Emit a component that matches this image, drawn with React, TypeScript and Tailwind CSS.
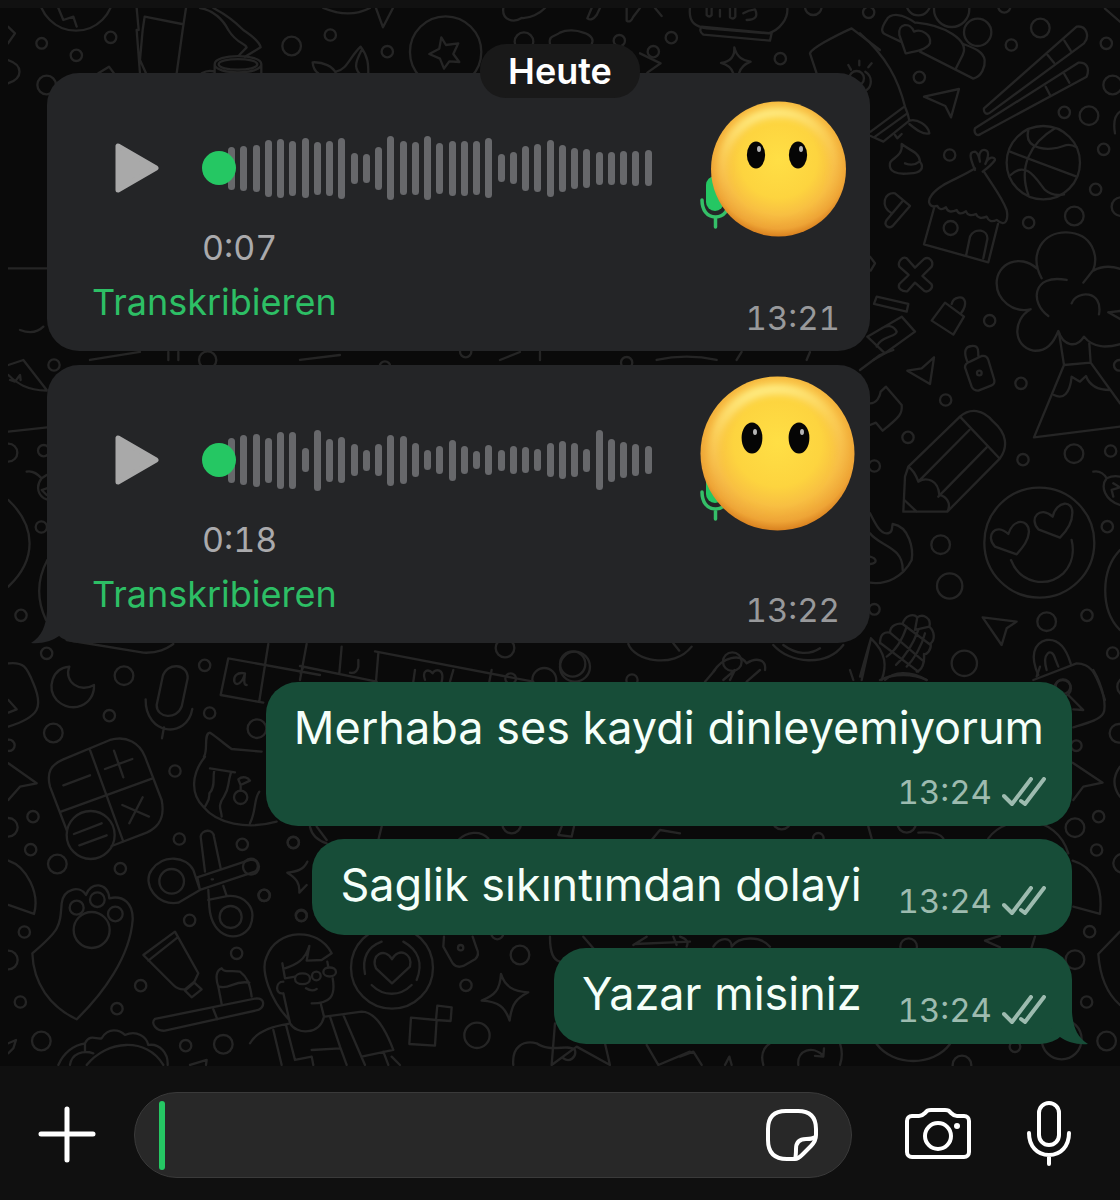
import { useState } from 'react';

type Dot = [number, number, number];

interface DoodlePatch {
  at: string;
  dots: Dot[];
  paths: string[];
}

// Wallpaper line art. Every patch is drawn at 3x and scaled down into place.
const patches: DoodlePatch[] = [
  {
    at: 'translate(40 30) scale(0.3333)',
    dots: [[5, 40, 16], [212, 22, 17], [109, 76, 17], [20, 165, 28], [755, 48, 28], [871, 15, 17], [1042, 65, 17], [503, 990, 26], [1217, 66, 107], [108, -110, 112]],
    paths: [
      'M290 0L300 130M308 0L300 90L318 130M428 0L410 130M175 130L207 110L222 130M290 -66L296 0M314 -40L426 -18M438 -66L428 0M314 -40L308 0',
      'M565 0C590 40 615 40 620 52L598 75M610 0C640 20 660 40 662 52L615 80M480 -66C520 -60 550 -30 565 0M520 -66Q570 -40 610 0',
      'M524 103C524 70 664 70 664 103C664 135 524 135 524 103ZM536 103C536 82 652 82 652 103C652 124 536 124 536 103ZM524 103V140M664 103V140M485 130Q505 118 524 125',
      'M818 97C850 95 880 110 888 130M818 97Q820 120 835 130M888 125C920 120 930 80 962 50C985 80 985 105 985 130M958 130C940 110 950 90 965 60',
      'M1204 22L1218 45L1255 40L1240 72L1258 96L1228 94L1212 116L1200 86L1168 72L1198 56Z',
      'M850 -66C900 -45 950 -45 990 -66M1008 -66L1029 -8L1059 -66M55 -66L70 -30L100 -40L110 -10',
      'M150 990L300 966M385 966V990M415 966V990M780 990L900 975M-96 715H20M-96 -10L-75 10L-96 40M-96 90C-50 105 -50 145 -96 160M-60 900C-20 915 0 900 10 890',
    ],
  },
  {
    at: 'translate(440 30) scale(0.3333)',
    dots: [[252, 35, 28], [538, 32, 17], [694, 23, 17], [1021, 86, 17], [640, 65, 17], [1250, 145, 22], [77, 965, 17], [560, 998, 17], [1120, -70, 25]],
    paths: [
      'M330 42C325 15 345 20 360 8C380 -2 410 0 430 8C455 15 462 30 455 42',
      'M600 70L662 100L622 128',
      'M883 52C890 80 905 90 932 95C905 105 900 120 897 130M883 52C885 80 870 95 843 99C865 105 875 115 880 130',
      'M1130 130L1110 70C1115 55 1180 20 1235 -5L1320 60',
      'M1225 105l8 14M1258 92v14M1295 100l-10 12M1276 125C1300 140 1295 170 1280 180',
      'M190 -66C185 -30 220 -20 245 -36C270 -34 300 -50 315 -66M455 -66L442 -35Q455 -25 470 -45L480 -66M560 -66V-28Q572 -20 580 -40L600 -66M645 -66L665 -42',
      'M750 -66C745 -20 770 -10 800 -5L985 10C1020 0 1045 -35 1042 -66M785 -10L995 10L990 32L790 14Q775 2 785 -10Z',
      'M800 -66V-45Q808 -36 815 -45V-66M840 -60V-40M870 -66V-38Q880 -30 886 -40V-66M910 -50Q925 -60 945 -62Q960 -30 920 -30',
      'M180 990L240 966M300 966V990M890 990L905 966M1110 966L1100 990M650 990Q740 970 830 990',
    ],
  },
  {
    at: 'translate(860 0) scale(0.3333)',
    dots: [[26, 37, 17], [353, 97, 41], [541, 84, 28], [454, 135, 17], [739, 130, 17], [178, 232, 17], [758, 255, 28], [613, 337, 17], [687, 347, 28], [731, 448, 17], [269, 465, 17], [707, 568, 17], [643, 648, 28], [506, 668, 17], [783, 620, 28], [389, 962, 17], [275, 28, 53], [175, 10, 36], [433, 20, 18], [550, 488, 110], [272, 684, 21]],
    paths: [
      'M165 68C130 42 92 35 78 62C60 90 65 100 80 105L122 125M180 155L340 236C365 230 376 200 374 180C370 155 345 145 310 132M170 68C250 75 330 120 308 165L288 205',
      'M137 160L118 105C113 70 150 65 162 95C185 85 215 105 210 130C200 150 165 155 137 160Z',
      'M0 100C80 170 115 240 135 320C142 335 145 345 148 362L70 425L32 408M32 395L130 322M45 410L142 340M148 362C170 355 205 375 208 400C190 405 170 390 148 372M105 405L112 415L125 402',
      'M192 290L297 267L273 352L256 318Z',
      'M125 432C145 450 178 455 180 485C195 505 180 520 150 520C110 525 85 515 90 490C92 475 130 470 125 432M135 490Q160 500 178 485',
      'M95 640C60 620 72 575 105 580L150 618L98 678C85 688 70 675 80 660L128 603',
      'M650 80L372 325C370 340 380 345 390 338L672 130C690 110 680 75 650 80ZM613 122L632 152M563 165L582 188',
      'M655 188L345 385C340 400 352 410 362 402L680 230C690 205 680 185 655 188ZM613 222L628 248M557 260L570 285',
      'M450 455L650 530M585 385C510 430 475 500 505 585M505 392C490 450 570 455 610 438Q630 430 650 442M452 525C500 480 530 540 555 570C570 583 590 588 612 583',
      'M345 510C330 475 325 455 345 455Q355 458 360 485C352 455 368 445 380 452Q390 460 376 492C385 470 405 468 405 480Q395 495 368 515M345 505C300 535 240 550 215 585C200 605 208 625 232 618Q240 635 258 622Q265 642 290 630Q297 648 318 634Q325 652 348 642Q355 660 380 650Q388 670 410 660C440 685 445 655 440 630C425 590 400 560 372 515M222 625L192 733L385 787L414 672M318 768L330 710C345 680 385 690 382 718L370 775',
      'M140 775L165 803L192 777C208 768 222 785 215 800L187 828L215 853C220 865 205 880 192 872L165 848L142 874C125 875 112 865 118 852L146 825L118 800C112 785 128 768 140 775Z',
      'M50 890L145 912L140 935L42 912ZM30 770L45 790L32 812',
      'M255 908L312 950L280 1004L215 962ZM275 912C280 890 310 885 315 905Q318 920 303 940',
      'M545 835C505 760 550 695 620 697C700 700 715 770 700 810L670 848M700 812C730 795 760 798 790 810M530 805C480 760 410 790 410 850C410 900 460 940 512 928C455 960 460 1040 520 1052C560 1055 580 1030 595 993C610 1040 650 1045 672 1010C700 1045 740 1045 790 1030M565 948C510 910 515 820 620 840M635 910C650 870 730 870 717 943M745 937L790 962M745 937L790 932',
      'M22 1010L125 950L165 995L75 1060ZM50 1040C60 1010 110 1010 110 995C100 975 80 975 65 985M40 1080L75 1060M735 26L780 65M765 400C760 370 765 345 780 335',
    ],
  },
  {
    at: 'translate(860 350) scale(0.3333)',
    dots: [[483, 100, 17], [257, 150, 17], [144, 262, 17], [43, 348, 17], [489, 329, 17], [642, 311, 28], [752, 303, 17], [778, 46, 16], [242, 584, 28], [269, 708, 38], [742, 530, 17], [560, 815, 28], [681, 796, 17], [758, 909, 17], [313, 940, 38], [43, 778, 16], [358, 69, 7], [538, 578, 165], [609, 1010, 22]],
    paths: [
      'M142 62L185 55L222 22L210 102Z',
      'M330 35L365 18Q380 15 385 30L403 90Q405 102 395 106L355 122Q340 122 335 110L315 52Q315 40 330 35ZM322 35C310 5 315 -10 335 -12C355 -15 355 0 355 18',
      'M597 -52L612 45L692 38L780 160M612 45L522 262L780 230M688 -20L692 38M582 135C610 150 630 130 635 80L660 95L678 78C690 110 720 120 750 120',
      'M30 160C50 160 60 140 62 125L78 110L125 165C128 190 120 200 68 242L48 218L30 225M0 60L60 15L100 0',
      'M145 350L300 200C330 172 370 178 400 215C440 250 445 290 420 325L262 485L130 485L135 380ZM300 200L418 325M328 240L175 395M380 292L235 440M145 350C160 360 170 380 175 395C200 380 235 390 238 435C260 440 275 460 262 485M133 450L170 485',
      'M470 613L405 590C375 560 405 515 445 552C460 505 505 505 507 545C505 575 485 595 470 613Z',
      'M600 563L535 538C505 505 540 465 578 500C590 450 640 450 637 490C637 520 618 545 600 563Z',
      'M453 630C480 700 560 715 610 670C640 640 642 600 635 570',
      'M30 490C45 520 60 550 80 550C100 550 95 530 98 522C150 530 160 600 155 630C130 680 80 705 30 698M30 550C60 590 130 590 128 660M30 620C50 625 55 640 30 642',
      'M60 880C60 850 75 845 90 848C90 825 115 818 128 822C135 795 160 790 172 802C190 790 215 805 208 830C225 845 225 870 212 880C215 900 200 915 192 912C195 940 185 960 170 965M62 880L175 965M90 848L192 935M128 822L212 885M172 802L165 840L208 830M80 920C110 900 130 860 140 830M108 945C135 920 160 880 175 840M140 950C160 930 185 890 195 850',
      'M0 980L33 865C80 910 80 950 65 990M33 865L5 990M75 990C100 965 150 960 200 990',
      'M368 802L470 815L440 835L425 885Z',
      'M535 975C510 920 520 880 560 870C600 865 620 900 632 940M560 960C545 910 575 890 585 925L595 950M520 990L650 940C690 940 705 960 735 1050',
      'M780 600C722 660 720 780 780 840M700 365C720 360 735 375 740 385C720 410 735 450 780 465M740 385Q760 375 780 380M760 400L780 412L755 420L760 440',
    ],
  },
  {
    at: 'translate(0 360) scale(0.3333)',
    dots: [[162, 15, 17], [25, 278, 27], [131, 272, 17], [124, 501, 17], [63, 766, 17], [1155, 20, 16]],
    paths: [
      'M25 15L70 0L140 90M25 45C50 70 80 90 140 92M30 60L45 65L60 45L62 60',
      'M25 215L142 202M80 335C100 330 115 345 125 355C105 380 115 410 140 418M125 355L140 345M140 385L125 390L140 405',
      'M25 420C110 500 110 600 25 680M142 600C110 660 110 720 138 780',
    ],
  },
  {
    at: 'translate(440 360) scale(0.3333)',
    dots: [[195, 864, 28], [398, 912, 38], [877, 905, 28]],
    paths: ['M565 852C580 900 700 930 755 860M1000 855C1050 912 1160 920 1210 855M1030 855C1070 885 1110 885 1140 865M700 850L718 872'],
  },
  {
    at: 'translate(0 640) scale(0.3333)',
    dots: [[140, 40, 17], [372, 107, 28], [614, 76, 17], [328, 227, 17], [160, 279, 28], [629, 219, 17], [27, 316, 17], [525, 393, 17], [771, 266, 28], [99, 530, 17], [92, 629, 17], [172, 672, 28], [538, 597, 17], [727, 613, 17], [361, 686, 17], [73, 876, 17], [880, 607, 17], [792, 766, 17], [904, 826, 17], [569, 841, 17], [710, 940, 17], [422, 1037, 17], [351, 1106, 17], [61, 1086, 17], [124, 1203, 28], [557, 1217, 17], [670, 1213, 28], [25, 562, 28], [25, 960, 28], [515, 724, 37], [692, 831, 33], [230, 803, 21], [292, 779, 22], [346, 822, 22], [275, 870, 54], [722, 472, 20], [272, 585, 72]],
    paths: [
      'M200 0L430 38C480 40 500 25 520 12',
      'M208 80C155 85 140 145 170 180C215 225 285 195 282 135C240 160 190 125 208 80Z',
      'M25 70C70 65 80 80 100 130C130 200 120 230 25 260M25 180L50 208L25 218',
      'M488 110C500 65 565 70 563 115L545 200C530 240 470 235 470 195ZM437 178C435 285 560 300 577 207M492 262L486 295',
      'M190 358L330 300C380 285 420 310 435 350L485 480C495 530 480 560 440 578L335 618M190 358C150 375 140 400 150 440L200 570M270 330L370 605M183 515L458 415M190 436L270 406M315 387L397 357M342 332L370 412M367 495L447 530M428 472L388 550M222 582L305 550M238 616L320 586',
      'M612 350C625 330 610 280 630 278C650 290 670 310 695 327L785 335M615 350C575 400 570 460 610 500C650 550 740 570 830 545M630 385L705 397M645 388C635 400 650 440 628 460C630 480 620 490 615 500M693 397C680 440 690 440 672 470C650 500 665 510 665 530M778 455C760 480 770 510 750 550M722 435L715 418C730 405 745 415 750 422ZM722 435V452',
      'M602 590C605 568 640 565 642 590L662 685M602 590L615 695M592 712L750 660C775 655 780 685 765 695L600 750ZM600 750L535 788C470 800 425 730 455 690C490 640 560 650 580 690L600 750M625 750L628 800C635 900 720 910 750 860C775 800 730 765 685 768L625 780M670 738L680 768M635 718h4',
      'M97 940C180 870 180 860 185 790C190 745 240 735 258 765C270 725 325 725 328 775C370 765 400 790 398 840C390 950 310 1060 230 1138C150 1100 100 1030 97 940Z',
      'M430 945L525 875L595 1000L583 1025L555 1048C540 1050 530 1045 520 1035ZM445 962L532 893M555 1052L583 1028L605 1048L575 1072Z',
      'M465 1137L770 1075C795 1075 795 1100 775 1110L495 1172C470 1175 450 1150 465 1137M640 1108L652 1138M665 1092L655 1040C645 1010 650 990 665 985C675 1000 690 990 720 995C740 1010 750 1030 755 1070M658 1040C690 1050 700 1020 748 1028',
      'M175 1275C190 1240 220 1215 255 1210C270 1180 290 1200 305 1195C325 1160 360 1170 375 1185C410 1170 440 1190 445 1215C480 1210 505 1240 503 1275M260 1275C320 1200 440 1190 490 1275M210 1275C215 1240 250 1230 280 1240M255 1210V1235M570 1275L620 1260L618 1275',
      'M25 370L110 430L60 440L25 480M25 662C80 680 120 760 102 822L25 795M25 1210L48 1200L40 1225L25 1240',
      'M685 55L960 105M685 55L662 165L790 188M805 12L778 183M920 12L900 120',
      'M735 100C710 95 700 110 703 125C708 140 728 130 735 100C733 120 730 135 740 135',
    ],
  },
  {
    at: 'translate(250 670) scale(0.3333)',
    dots: [[130, 518, 17], [3, 590, 24], [43, 676, 17], [154, 738, 16], [810, 855, 28], [648, 946, 17], [681, 1096, 38], [782, 26, 16], [883, 30, 36], [975, -10, 45], [1146, 30, 17], [785, 462, 28], [426, 893, 123], [632, 833, 8], [742, 790, 18], [199, 918, 13]],
    paths: [
      'M345 912C335 860 355 830 395 815M460 815C505 840 520 880 500 930M365 945C400 980 450 980 485 945',
      'M426 940L378 895C360 855 405 830 426 868C445 830 490 850 480 890Z',
      'M582 800L580 830L608 880Q620 895 640 888L675 868Q690 855 680 835L668 800',
      'M753 912C765 950 790 965 835 967C800 985 785 1000 779 1052C765 1010 745 995 695 992C735 975 750 960 753 912Z',
      'M483 1043L560 1050L555 1127L478 1122ZM562 1007L605 1012L602 1053L558 1050Z',
      'M118 1050C60 990 30 900 50 860C80 775 205 770 245 850L215 870L170 872L178 828C165 870 140 885 100 897M97 880L105 925L135 920M100 935C75 935 75 975 100 970L120 1060C140 1095 210 1095 222 1040L212 1000M232 875L235 892M248 925C258 980 240 1000 185 1000M168 955Q185 966 200 957',
      'M135 926C135 905 180 905 180 926C180 948 135 948 135 926ZM220 906C220 888 258 888 258 906C258 924 220 924 220 906Z',
      'M0 1120C20 1085 60 1070 115 1062M225 1040L335 1025C370 1025 400 1060 430 1140L335 1160M70 1080L95 1185M108 1065L135 1170L185 1160L190 1185M240 1040L270 1130L290 1185M280 1035L345 1185M185 1140L270 1135M400 1145L415 1185M425 1160L450 1185',
      'M905 1185L915 1060M905 1185L980 1130L1080 1185L1065 1120M790 1185C785 1130 820 1110 860 1120C900 1150 960 1120 975 1140C980 1160 960 1180 940 1165M1190 1125L1225 1185L1320 1145',
      'M150 -12L380 35M160 -10L152 10M275 -70L268 10M385 -50L378 35M495 0L490 35M610 0L600 35M725 0L718 35M525 30C515 0 535 -5 548 10C555 -5 585 -5 575 35M300 8Q320 12 325 -10V-30M180 470C185 495 200 510 230 520M200 470L230 510M395 470L385 510M625 510C650 485 690 480 715 505M935 470L925 495L965 500L972 470M1205 510L1230 480L1290 490',
      'M375 -56L850 35',
      'M172 575C160 600 140 605 112 608C140 625 150 640 148 668L170 645M900 800C900 850 910 870 930 875M1000 800L1030 835M1150 825L1190 800M1155 822L1320 815M1270 800L1280 825',
    ],
  },
  {
    at: 'translate(680 670) scale(0.3333)',
    dots: [[1189, 227, 16], [1148, 55, 25], [1185, 473, 28], [1256, 440, 17], [1250, 540, 17], [1317, 190, 28], [1229, 785, 17], [1185, 869, 28], [1220, 996, 17], [1280, 1113, 28], [1328, 580, 28], [686, 830, 25], [415, 505, 16], [846, 1185, 28], [1005, 1130, 16], [1145, 1108, 60], [305, 450, 28], [680, 460, 28], [1340, 50, 28]],
    paths: [
      'M1240 0C1270 50 1280 110 1270 130C1260 150 1220 160 1180 172M1070 20L1080 -10M1165 75L1210 120L1180 118',
      'M1178 278L1268 338L1210 350L1180 390M1320 290C1298 320 1298 350 1320 380M1178 572C1240 590 1270 650 1260 732L1180 710M925 505C980 430 1130 430 1165 550',
      'M960 798L915 812L960 832M1065 800L1055 832M1320 785L1255 852C1260 920 1280 970 1320 1005M590 1122C640 1190 760 1190 810 1122',
      'M250 1185C240 1150 255 1130 270 1120M480 1120C490 1150 485 1170 480 1185M355 1185C350 1140 400 1125 430 1158M432 1135L430 1160L405 1158M0 1160L40 1145L65 1185M135 1185L148 1160L155 1185',
      'M75 35L105 0M130 30L165 0L150 30M200 35L240 0M510 0L520 30M600 30C640 10 700 10 740 30M565 470L575 505M715 488C750 485 780 490 790 505M100 830C120 800 155 800 155 830C175 800 240 795 270 830M0 800Q30 810 20 830',
      'M100 5C130 -40 180 -50 200 -20C230 -40 260 -30 255 0',
    ],
  },
];

function Wallpaper() {
  return (
    <svg
      className="absolute inset-y-0 left-2 right-0 h-full w-[calc(100%-8px)]"
      viewBox="8 8 1112 1058"
      preserveAspectRatio="xMinYMin slice"
      fill="none"
      stroke="#252525"
      strokeWidth="7"
      strokeLinecap="round"
      strokeLinejoin="round"
      aria-hidden="true"
    >
      {patches.map((patch) => (
        <g key={patch.at} transform={patch.at}>
          {patch.dots.map(([cx, cy, r], i) => (
            <circle key={i} cx={cx} cy={cy} r={r} />
          ))}
          {patch.paths.map((d, i) => (
            <path key={i} d={d} />
          ))}
        </g>
      ))}
    </svg>
  );
}

interface Face {
  cx: number;
  cy: number;
  r: number;
  eyes: [number, number];
  eyeY: number;
}

interface VoiceNote {
  id: string;
  duration: string;
  time: string;
  bars: number[];
  face: Face;
  tail?: boolean;
}

const voiceNotes: VoiceNote[] = [
  {
    id: 'note-1',
    duration: '0:07',
    time: '13:21',
    bars: [43, 45, 47, 57, 59, 55, 60, 53, 55, 61, 31, 29, 43, 64, 54, 53, 64, 51, 55, 55, 54, 60, 28, 32, 45, 48, 57, 47, 41, 39, 33, 33, 34, 35, 36],
    face: { cx: 80.5, cy: 87, r: 67.5, eyes: [58, 100], eyeY: 73 },
  },
  {
    id: 'note-2',
    duration: '0:18',
    time: '13:22',
    bars: [45, 50, 53, 45, 57, 57, 24, 61, 43, 46, 32, 21, 32, 51, 48, 34, 20, 28, 41, 28, 18, 30, 21, 28, 26, 22, 34, 38, 34, 23, 60, 43, 36, 32, 28],
    face: { cx: 79.5, cy: 79.5, r: 77, eyes: [54, 101], eyeY: 64 },
    tail: true,
  },
];

const messages = [
  { text: 'Merhaba ses kaydi dinleyemiyorum', time: '13:24', stacked: true },
  { text: 'Saglik sıkıntımdan dolayi', time: '13:24' },
  { text: 'Yazar misiniz', time: '13:24', tail: true },
];

function FaceAvatar({ id, face }: { id: string; face: Face }) {
  const { cx, cy, r, eyes, eyeY } = face;
  const rx = r * 0.135;
  const ry = r * 0.2;
  return (
    <svg viewBox="0 0 160 160" className="h-40 w-40 shrink-0" aria-hidden="true">
      <defs>
        <radialGradient id={`${id}-skin`} cx="0.5" cy="0.43" r="0.57">
          <stop offset="0" stopColor="#ffdf45" />
          <stop offset="0.5" stopColor="#fdd43f" />
          <stop offset="0.72" stopColor="#f8bf42" />
          <stop offset="0.9" stopColor="#eea436" />
          <stop offset="1" stopColor="#d9811f" />
        </radialGradient>
        <linearGradient id={`${id}-shine`} x1="0.3" y1="0" x2="0.5" y2="1">
          <stop offset="0" stopColor="#fff08a" stopOpacity="0.9" />
          <stop offset="0.3" stopColor="#ffe680" stopOpacity="0.35" />
          <stop offset="0.6" stopColor="#f4c068" stopOpacity="0.2" />
          <stop offset="1" stopColor="#f4b050" stopOpacity="0" />
        </linearGradient>
        <filter id={`${id}-soft`} x="-20%" y="-20%" width="140%" height="140%">
          <feGaussianBlur stdDeviation="3" />
        </filter>
      </defs>
      <rect x="8" y="94" width="18" height="35" rx="9" fill="#25c763" />
      <path d="M4 118C4 128 9 135 17.500 135S31 128 31 118M17.500 135V145" fill="none" stroke="#35bf68" strokeWidth="3.500" strokeLinecap="round" />
      <circle cx={cx} cy={cy} r={r} fill={`url(#${id}-skin)`} />
      <circle cx={cx} cy={cy} r={r * 0.83} fill="none" stroke={`url(#${id}-shine)`} strokeWidth={r * 0.14} filter={`url(#${id}-soft)`} />
      {eyes.map((x) => (
        <g key={x}>
          <ellipse cx={x} cy={eyeY} rx={rx} ry={ry} fill="#050505" />
          <ellipse cx={x + 3} cy={eyeY - 6} rx="2" ry="3" fill="#b5b5b5" />
        </g>
      ))}
    </svg>
  );
}

function Tail({ side }: { side: 'left' | 'right' }) {
  return (
    <svg
      viewBox="0 0 40 46"
      className={
        side === 'left'
          ? 'absolute -left-4 -bottom-px h-[46px] w-10 text-[#242527]'
          : 'absolute -right-4 -bottom-px h-[46px] w-10 -scale-x-100 text-[#174d38]'
      }
      fill="currentColor"
      aria-hidden="true"
    >
      <path d="M16 0V13C15 28 11 38 0 45C11 46 21 43 28 38L40 26V0Z" />
    </svg>
  );
}

function VoiceBubble({ note }: { note: VoiceNote }) {
  const [position, setPosition] = useState(0);

  return (
    <article className="relative w-full max-w-[823px] rounded-[32px] bg-[#242527] pt-[9px] pb-[13px]">
      <div className="flex items-start justify-between pl-[68px] pr-3">
        <button type="button" aria-label="Abspielen" className="mt-[54px] flex h-16 w-11 shrink-0 items-center">
          <svg viewBox="0 0 44 50" className="h-[50px] w-11" aria-hidden="true">
            <path d="M3 3V47L41 25Z" fill="#a9a9a9" stroke="#a9a9a9" strokeWidth="5" strokeLinejoin="round" />
          </svg>
        </button>

        <div className="ml-[43px] mr-[46px] mt-[54px] min-w-0 flex-1">
          <div className="relative">
            <div className="flex h-16 items-center justify-between pl-[26px]">
              {note.bars.map((height, i) => (
                <span key={i} className="w-[7px] rounded-full bg-[#67686b]" style={{ height }} />
              ))}
            </div>
            <input
              type="range"
              min={0}
              max={100}
              value={position}
              onChange={(e) => setPosition(Number(e.target.value))}
              aria-label="Wiedergabeposition"
              className="absolute inset-0 h-16 w-full appearance-none bg-transparent [&::-webkit-slider-thumb]:h-[34px] [&::-webkit-slider-thumb]:w-[34px] [&::-webkit-slider-thumb]:appearance-none [&::-webkit-slider-thumb]:rounded-full [&::-webkit-slider-thumb]:bg-[#25c763]"
            />
          </div>
          <p className="mt-7 text-[34px] leading-10 text-[#aaaaac] tabular-nums">{note.duration}</p>
        </div>

        <FaceAvatar id={note.id} face={note.face} />
      </div>

      <div className="mt-3 flex items-end justify-between pl-[45px] pr-[30px]">
        <button type="button" className="mb-[14px] text-[36px] leading-[44px] text-[#2dbf65]">
          Transkribieren
        </button>
        <time className="text-[33px] leading-10 text-[#98999b] tabular-nums">{note.time}</time>
      </div>

      {note.tail && <Tail side="left" />}
    </article>
  );
}

function DoubleCheck() {
  return (
    <svg viewBox="0 0 44 30" className="h-[30px] w-11" fill="none" stroke="currentColor" strokeWidth="4" strokeLinecap="round" strokeLinejoin="round" aria-hidden="true">
      <path d="M2 19L10 27L29 2" />
      <path d="M19 24L23 27L42 2" />
    </svg>
  );
}

function TextBubble({ text, time, stacked, tail }: { text: string; time: string; stacked?: boolean; tail?: boolean }) {
  return (
    <article
      className={`relative flex rounded-[32px] bg-[#174d38] px-7 pt-[18px] pb-[14px] ${stacked ? 'flex-col gap-4' : 'items-end gap-9'}`}
    >
      <p className={`text-[45px] leading-[56px] text-[#f5fffa] ${stacked ? '' : 'mb-2'}`}>{text}</p>
      <div className="-mr-[2px] flex items-center justify-end gap-[10px] text-[#9dbbaf]">
        <time className="text-[33px] leading-10 tabular-nums">{time}</time>
        <DoubleCheck />
      </div>
      {tail && <Tail side="right" />}
    </article>
  );
}

function Composer() {
  const [draft, setDraft] = useState('');

  return (
    <footer className="flex items-center bg-[#101010] pt-[26px] pr-[47px] pb-[22px] pl-[38px] text-white">
      <button type="button" aria-label="Anhang hinzufügen" className="shrink-0">
        <svg viewBox="0 0 58 58" className="h-[58px] w-[58px]" fill="none" stroke="currentColor" strokeWidth="5" strokeLinecap="round" aria-hidden="true">
          <path d="M29 3V54M3 28H55" />
        </svg>
      </button>

      <div className="ml-[38px] flex h-[86px] min-w-0 flex-1 items-center rounded-full border border-[#3a3a3a] bg-[#282828] pr-8 pl-6">
        <span className="h-[69px] w-[6px] rounded-full bg-[#25c763]" />
        <input
          type="text"
          value={draft}
          onChange={(e) => setDraft(e.target.value)}
          aria-label="Nachricht"
          className="h-full min-w-0 flex-1 bg-transparent px-2 text-[45px] outline-none"
        />
        <button type="button" aria-label="Sticker" className="shrink-0">
          <svg viewBox="0 0 54 54" className="h-[54px] w-[54px]" fill="none" stroke="currentColor" strokeWidth="4" strokeLinejoin="round" aria-hidden="true">
            <path d="M30 51H22C9 51 3 44 3 32V21C3 9 9 3 21 3H33C45 3 51 9 51 21V27C51 32 49 35 46 38L38 46C35 49 33 51 30 51Z" />
            <path d="M30 51C31 48 31 45 31 41C31 34 35 31 41 31C45 31 48 31 50 29" />
          </svg>
        </button>
      </div>

      <button type="button" aria-label="Kamera" className="ml-[52px] shrink-0">
        <svg viewBox="0 0 68 58" className="h-[58px] w-[68px]" fill="none" stroke="currentColor" strokeWidth="4" strokeLinejoin="round" aria-hidden="true">
          <path d="M8 10H15C18 10 19 9 21 7L22 6C23 4 25 4 27 4H41C43 4 45 4 46 6L47 7C49 9 50 10 53 10H60C63 10 65 12 65 15V46C65 49 63 51 60 51H8C5 51 3 49 3 46V15C3 12 5 10 8 10Z" />
          <circle cx="34" cy="30" r="13" />
          <circle cx="53" cy="20" r="3" fill="currentColor" stroke="none" />
        </svg>
      </button>

      <button type="button" aria-label="Sprachnachricht aufnehmen" className="ml-[53px] shrink-0">
        <svg viewBox="0 0 48 70" className="h-[70px] w-12" fill="none" stroke="currentColor" strokeWidth="4" strokeLinecap="round" aria-hidden="true">
          <rect x="14" y="3" width="20" height="42" rx="10" />
          <path d="M4 33C4 46 12 55 24 55S44 46 44 33M24 55V64" />
        </svg>
      </button>
    </footer>
  );
}

export default function App() {
  return (
    <div className="flex min-h-screen flex-col bg-[#0a0a0a] font-['Inter','Liberation_Sans',sans-serif]">
      <header className="h-2 bg-[#111111]" />

      <main className="relative flex-1 overflow-hidden pt-[65px] pr-12 pb-[22px] pl-[47px]">
        <Wallpaper />

        <div className="absolute inset-x-0 top-9 z-10 flex justify-center">
          <h2 className="rounded-[26px] bg-[#191919] px-7 py-[7px] text-[36px] leading-10 font-semibold text-white">Heute</h2>
        </div>

        <section className="relative flex flex-col items-start gap-[14px]">
          {voiceNotes.map((note) => (
            <VoiceBubble key={note.id} note={note} />
          ))}
        </section>

        <section className="relative mt-[39px] flex flex-col items-end gap-[13px]">
          {messages.map((message) => (
            <TextBubble key={message.text} {...message} />
          ))}
        </section>
      </main>

      <Composer />
    </div>
  );
}
